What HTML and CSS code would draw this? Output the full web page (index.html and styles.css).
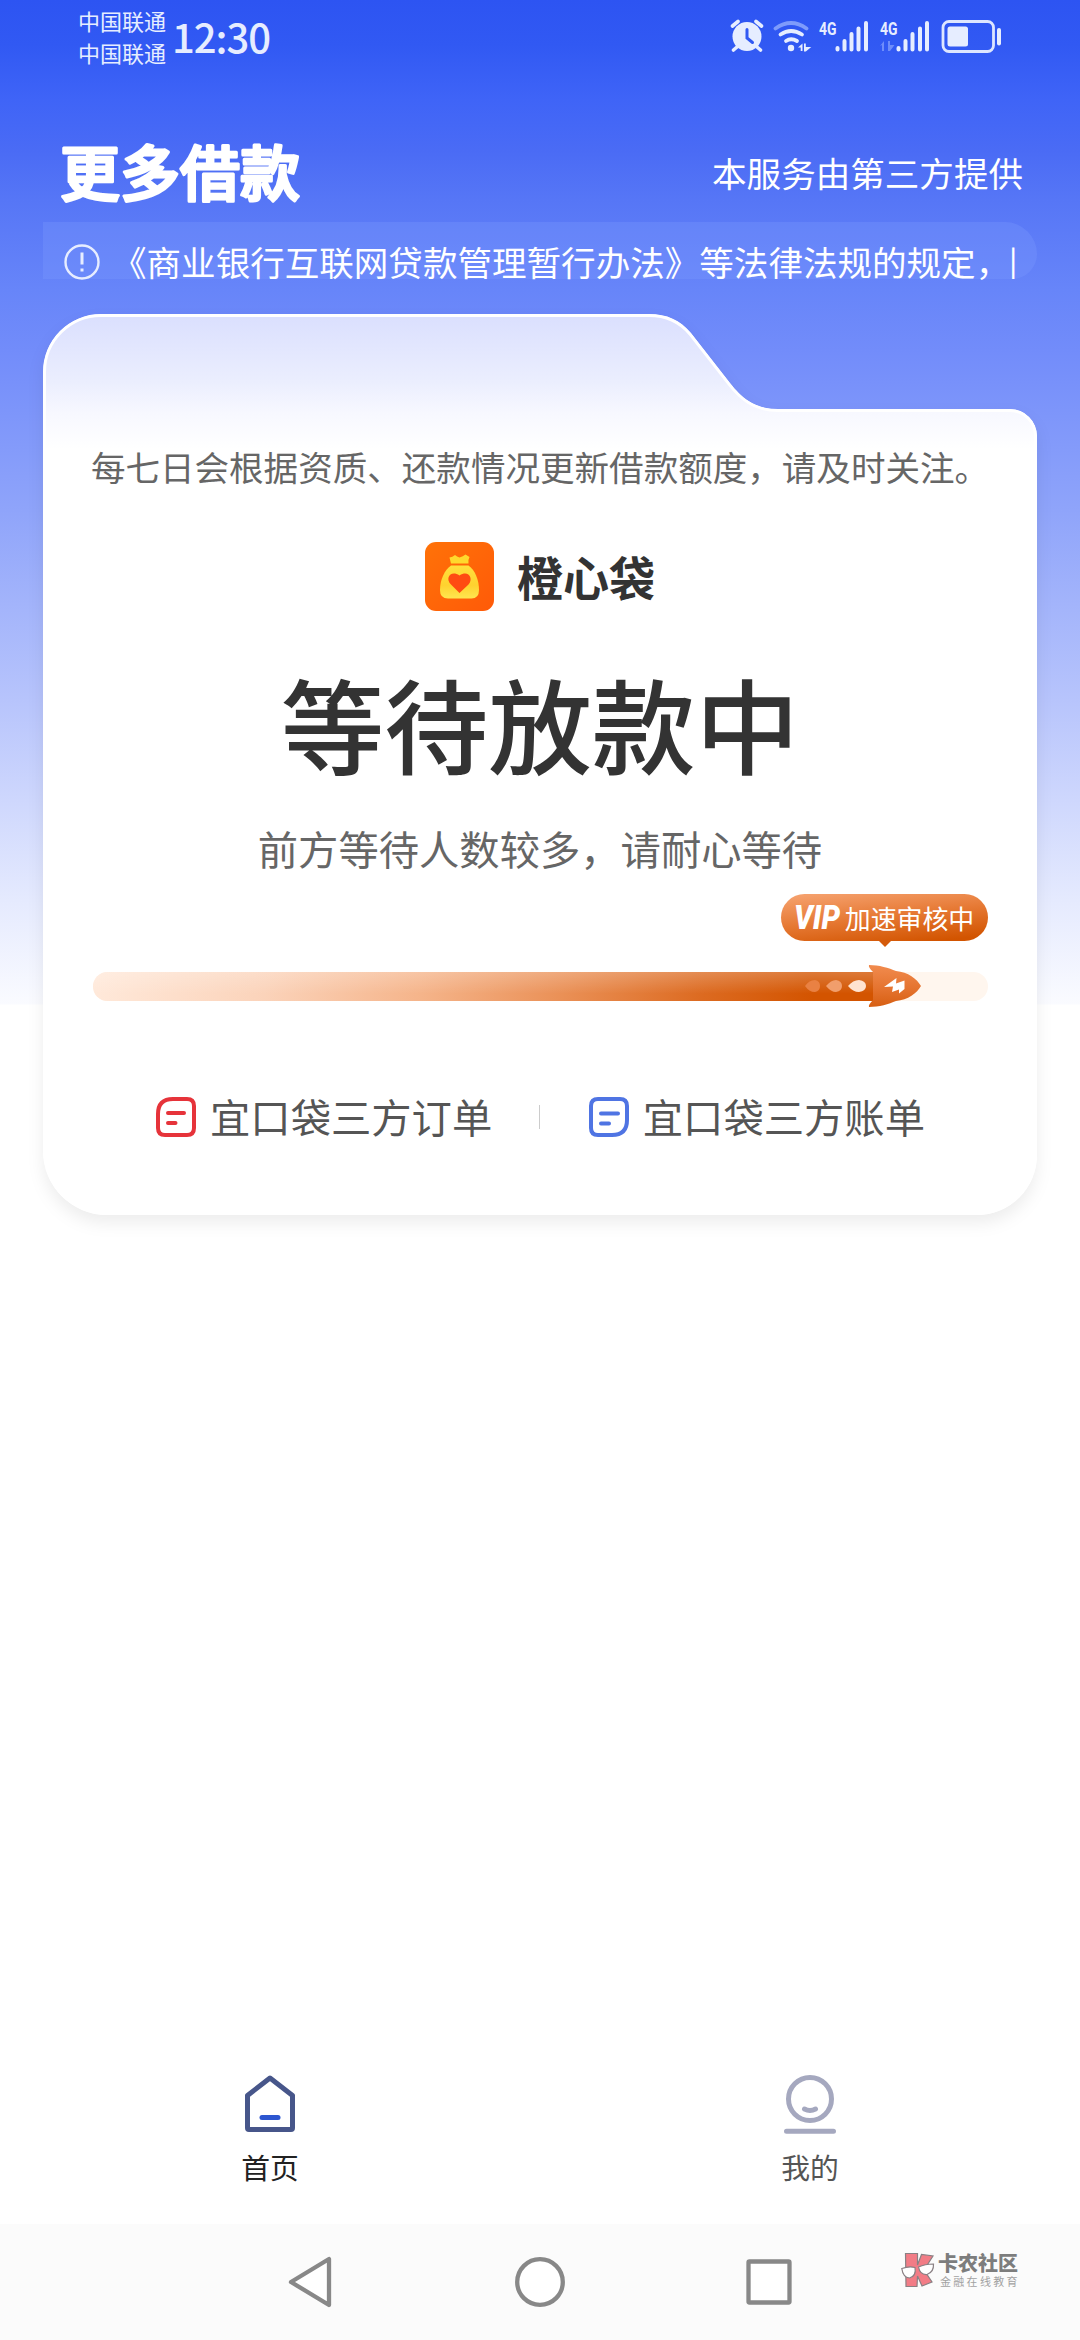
FILE: index.html
```html
<!DOCTYPE html>
<html lang="zh-CN">
<head>
<meta charset="utf-8">
<title>更多借款</title>
<link rel="stylesheet" href="styles.css">
</head>
<body>
<div class="screen">
  <header class="status">
    <div class="carriers"><span>中国联通</span><span>中国联通</span></div>
    <div class="clock">12:30</div>
    <svg class="status-icons" viewBox="730 16 274 40" width="274" height="40" fill="#e6edff">
      <circle cx="747" cy="36.500" r="14.500"/>
      <path d="M732.500 26l5.500-4.500M761.500 26l-5.500-4.500M737 47l-3.500 3M757 47l3.500 3" stroke="#e6edff" stroke-width="3.600" stroke-linecap="round"/>
      <path d="M747 29.500v8.500l5.500 4.500" fill="none" stroke="#3159f3" stroke-width="3" stroke-linecap="round"/>
      <g fill="none" stroke="#e6edff" stroke-width="3.800" stroke-linecap="round">
        <path d="M775.500 28.500Q791 17.500 806.500 28.500" stroke="#7e9bfb"/>
        <path d="M780.500 34.500Q791 27.500 802 34.500"/>
        <path d="M786 41Q791 37.500 797 41"/>
      </g>
      <circle cx="791" cy="48" r="3.200"/>
      <path d="M798 47.500l4.500-4v7.500h-1.800v-3.500zM804 43.500h1.800v3.500h5.500l-5.500 4.500h-1.800z"/>
      <text class="net" x="819" y="34.500" textLength="17.500" lengthAdjust="spacingAndGlyphs">4G</text>
      <path d="M837.500 48v1.500M844.500 41v8.500M851.500 34v15.500M858.500 28.500v21M866 23v26.500" stroke="#e6edff" stroke-width="4" stroke-linecap="round"/>
      <text class="net" x="880" y="34.500" textLength="17.500" lengthAdjust="spacingAndGlyphs">4G</text>
      <path d="M880 46l4-5v10h-2v-6zM888 41h2v4h4.500l-4.500 6h-2z" fill="#6e8dfa"/>
      <path d="M898.500 48v1.500M905.500 41v8.500M912.500 34v15.500M920 28.500v21M927 23v26.500" stroke="#e6edff" stroke-width="4" stroke-linecap="round"/>
      <rect x="943" y="21.500" width="50.500" height="30" rx="6" fill="none" stroke="#dde6ff" stroke-width="2.800"/>
      <rect x="947.500" y="26.500" width="20.500" height="20" rx="2.500"/>
      <rect x="997" y="28" width="4" height="17.500" rx="2"/>
    </svg>
  </header>

  <div class="heading">
    <h1 class="title"><svg viewBox="0 0 250 96" width="250" height="96"><text x="0" y="72">更多借款</text></svg></h1>
    <span class="provider">本服务由第三方提供</span>
  </div>

  <div class="notice">
    <svg class="notice-icon" viewBox="0 0 36 36" width="36" height="36" fill="none" stroke="#e7edff">
      <circle cx="18" cy="18" r="16.500" stroke-width="2.400"/>
      <path d="M18 8.500v12M18 24.500v3" stroke-width="3"/>
    </svg>
    <p class="notice-text">《商业银行互联网贷款管理暂行办法》等法律法规的规定&#xFF0C;</p><span class="notice-edge">|</span>
  </div>

  <main class="card">
    <svg class="card-shape" viewBox="0 0 994 901" width="994" height="901">
      <defs>
        <linearGradient id="sheet" x1="0" y1="0" x2="0" y2="901" gradientUnits="userSpaceOnUse">
          <stop offset="0" stop-color="#dadffe"/>
          <stop offset=".075" stop-color="#ebeefe"/>
          <stop offset=".11" stop-color="#f7f8ff"/>
          <stop offset=".15" stop-color="#fff"/>
        </linearGradient>
        <clipPath id="outline"><path d="M0 58A58 58 0 0 1 58 0H606C624 0 637 6 648 19L687 69C698 83 711 95 735 95H967A27 27 0 0 1 994 122V841A60 60 0 0 1 934 901H64A64 64 0 0 1 0 837Z"/></clipPath>
      </defs>
      <path clip-path="url(#outline)" d="M0 58A58 58 0 0 1 58 0H606C624 0 637 6 648 19L687 69C698 83 711 95 735 95H967A27 27 0 0 1 994 122V841A60 60 0 0 1 934 901H64A64 64 0 0 1 0 837Z" fill="url(#sheet)" stroke="#fff" stroke-width="6"/>
    </svg>
    <p class="tip">每七日会根据资质、还款情况更新借款额度&#xFF0C;请及时关注。</p>

    <div class="brand">
      <svg viewBox="0 0 69 69" width="69" height="69">
        <defs>
          <linearGradient id="tile" x1="0" y1="0" x2="1" y2="1"><stop offset="0" stop-color="#ff7208"/><stop offset="1" stop-color="#ff5a08"/></linearGradient>
          <linearGradient id="bag" x1="0" y1="0" x2="0" y2="1"><stop offset="0" stop-color="#ffe03c"/><stop offset=".6" stop-color="#ffd22f"/><stop offset="1" stop-color="#ffe650"/></linearGradient>
        </defs>
        <rect width="69" height="69" rx="11" fill="url(#tile)"/>
        <path d="M26 21.500L24.500 15.500Q27.500 15 30 13Q32 14.500 34.500 15.500Q38 14.500 40.500 12.500L44.500 15Q43 17.500 43.500 21.500Z" fill="#ffd92d"/>
        <path d="M26 23.500H43.500C50 28 54 38 54 48Q54 56.500 46.500 56.500H23Q15 56.500 15 48C15 38 19.500 28 26 23.500Z" fill="url(#bag)"/>
        <path d="M34.500 51L26 42.500C19.500 36 26 27.500 34.500 33.500C43 27.500 49 36 43.500 42.500Z" fill="#ff4b12"/>
      </svg>
      <span class="brand-name">橙心袋</span>
    </div>

    <h2 class="state">等待放款中</h2>
    <p class="queue">前方等待人数较多&#xFF0C;请耐心等待</p>

    <div class="progress">
      <div class="bubble"><svg viewBox="0 0 50 46" width="50" height="46"><text class="vip" x="0" y="34" textLength="46" lengthAdjust="spacingAndGlyphs">VIP</text></svg><span>加速审核中</span></div>
      <div class="track">
        <div class="fill"></div>
        <svg class="rocket" viewBox="0 0 120 44" width="120" height="44">
          <defs>
            <linearGradient id="hull" x1="0" y1="0" x2="0" y2="1"><stop offset="0" stop-color="#f18b4e"/><stop offset=".55" stop-color="#e57430"/><stop offset="1" stop-color="#d75f12"/></linearGradient>
          </defs>
          <path d="M64 1C74 1 84 4 91 7C103 8 112 15 116 22C112 29 103 36 91 37C84 40 74 43 64 43Q63 41 68 36V8Q63 3 64 1Z" fill="url(#hull)"/>
          <path d="M0 22Q4 16 10 16Q15 17 15 22Q15 27 10 28Q4 28 0 22Z" fill="#e98143"/>
          <path d="M21 22Q26 16 31 16Q37 17 37 22Q37 27 31 28Q26 28 21 22Z" fill="#f19e6c"/>
          <path d="M43 22Q48 16 54 16Q61 17 61 22Q61 27 54 28Q48 28 43 22Z" fill="#ffe3d0"/>
          <path d="M79 23L91.500 14L91 19.500L99.500 16.500V25L94 29.500V25.500L87 28L88 22.500Z" fill="#fff"/>
        </svg>
      </div>
    </div>

    <nav class="links">
      <a class="link">
        <svg viewBox="0 0 42 42" width="42" height="42" fill="none" stroke="#e6333a" stroke-width="4" stroke-linecap="round"><path d="M18 3H32Q39 3 39 10V32Q39 39 32 39H10Q3 39 3 32V18Q3 3 18 3Z"/><path d="M13 17H29M13 27H20.500"/></svg>
        <span>宜口袋三方订单</span>
      </a>
      <span class="rule"></span>
      <a class="link">
        <svg viewBox="0 0 42 42" width="42" height="42" fill="none" stroke="#4f74e3" stroke-width="4" stroke-linecap="round"><path d="M10 3H32Q39 3 39 10V24Q39 39 24 39H10Q3 39 3 32V10Q3 3 10 3Z"/><path d="M13 17.500H30M13 27.500H21"/></svg>
        <span>宜口袋三方账单</span>
      </a>
    </nav>
  </main>

  <div class="spacer"></div>

  <nav class="tabs">
    <a class="tab active">
      <svg viewBox="0 0 60 60" width="60" height="60" fill="none" stroke-linecap="round" stroke-linejoin="round"><path d="M30 4L52.500 21.500V54Q52.500 55.500 51 55.500H9Q7.500 55.500 7.500 54V21.500Z" stroke="#47568a" stroke-width="5"/><path d="M22 43.500H38" stroke="#2d56d0" stroke-width="5"/></svg>
      <span>首页</span>
    </a>
    <a class="tab">
      <svg viewBox="0 0 60 60" width="60" height="60" fill="none" stroke="#a5a8bf" stroke-width="5" stroke-linecap="round"><circle cx="30" cy="25" r="21.500"/><path d="M24.500 35Q30 38 35.500 35M6.500 57.300H53.500"/></svg>
      <span>我的</span>
    </a>
  </nav>

  <footer class="system">
    <svg viewBox="0 0 60 60" width="60" height="60"><path d="M48 7V53L10 30Z"/></svg>
    <svg viewBox="0 0 60 60" width="60" height="60"><circle cx="30" cy="30" r="22.800"/></svg>
    <svg viewBox="0 0 60 60" width="60" height="60"><rect x="9.500" y="9.500" width="41" height="41" rx="1"/></svg>
  </footer>

  <div class="watermark">
    <svg viewBox="0 0 34 36" width="34" height="36" stroke="#8a8084" stroke-width="1.200">
      <path d="M4.500 1.500H16.500V13L20.500 2.500L32 4L23 18L31 30L21 34L16.500 24L16 34.500H5Z" fill="#f27c86"/>
      <path d="M.8 16.500Q8 14 14 15.500Q15.500 24 8.500 26Q2 25.500.8 16.500ZM17.500 15Q24 12 32.500 12Q33 20 26 22.500Q19 23 17.500 15Z" fill="#fff"/>
    </svg>
    <div class="wm-text"><b>卡农社区</b><span>金融在线教育</span></div>
  </div>
</div>
</body>
</html>
```
FILE: styles.css
```css
* { box-sizing: border-box; }
body {
  margin: 0;
  background: #fff;
  font-family: "Noto Sans CJK SC", "Noto Sans", sans-serif;
}
h1, h2, p { margin: 0; }
svg { display: block; flex: none; }

.screen {
  position: relative;
  display: flex;
  flex-direction: column;
  width: 1080px;
  height: 2340px;
  overflow: hidden;
  background: linear-gradient(#2d54f2 0, #3159f3 45px, #3f64f7 100px, #4a6bf5 150px, #5676f6 200px, #6785f9 290px, #728cfa 350px, #8fa4fa 510px, #b7c4fc 700px, #e5eafe 900px, #fafbff 1004px, #fff 1005px);
}

/* status bar */
.status {
  display: flex;
  height: 112px;
  padding-left: 78px;
  color: #e6edff;
}
.carriers {
  display: flex;
  flex-direction: column;
  width: 94px;
  padding-top: 4px;
  font-size: 22px;
  line-height: 32px;
}
.clock {
  width: 558px;
  padding-top: 6px;
  font-size: 40px;
  line-height: 61px;
  font-weight: 500;
  letter-spacing: -1px;
}
.status-icons { margin-top: 16px; }
.net { font: 700 18px "Roboto", sans-serif; }

.heading {
  display: flex;
  align-items: center;
  justify-content: space-between;
  height: 110px;
  padding: 10px 57px 0 60px;
  color: #fff;
}
/* medium weight plus a round-joined stroke gives the soft stroke ends */
.title svg { overflow: visible; }
.title text {
  font-size: 60px;
  font-weight: 500;
  fill: #fff;
  stroke: #fff;
  stroke-width: 3px;
  stroke-linejoin: round;
}
.provider { font-size: 34.56px; line-height: 52px; }

.notice {
  display: flex;
  align-items: center;
  height: 57px;
  margin: 0 43px;
  padding: 22px 20px 0 21px;
  border-radius: 0 36px 28px 0;
  background: rgba(125, 155, 255, .3);
  color: #fff;
}
.notice-text {
  margin: -2px 0 0 12px;
  white-space: nowrap;
  font-size: 34.56px;
  line-height: 52px;
}
.notice-edge { margin: -5px 0 0 -1px; font-size: 28px; line-height: 40px; font-weight: 500; }

.card {
  position: relative;
  display: flex;
  flex-direction: column;
  align-items: center;
  width: 994px;
  height: 901px;
  margin: 35px auto 0;
}
.card-shape {
  position: absolute;
  inset: 0;
  z-index: 0;
  filter: drop-shadow(0 8px 8px rgba(0, 0, 0, .07));
}
.card > :not(.card-shape) { position: relative; z-index: 1; }
.tip {
  margin-top: 126px;
  white-space: nowrap;
  font-size: 34.56px;
  line-height: 52px;
  color: #666;
}
.brand {
  display: flex;
  align-items: center;
  gap: 23px;
  height: 69px;
  margin-top: 50px;
}
.brand-name { font-size: 46.08px; line-height: 67px; font-weight: 700; color: #333; }
.state {
  margin-top: 36px;
  font-size: 103.68px;
  line-height: 150px;
  font-weight: 500;
  color: #333;
}
.queue {
  margin-top: 21px;
  white-space: nowrap;
  font-size: 40.32px;
  line-height: 60px;
  color: #666;
}

.progress {
  display: flex;
  flex-direction: column;
  width: 895px;
  margin-top: 16px;
}
.bubble {
  position: relative;
  display: flex;
  align-items: center;
  justify-content: center;
  gap: 1px;
  width: 207px;
  height: 47px;
  margin-left: auto;
  border-radius: 24px;
  background: linear-gradient(174deg, #f5a06c 5%, #e67934 48%, #d25400 92%);
  color: #fff;
}
.bubble::after {
  content: "";
  position: absolute;
  top: 46px;
  left: 97px;
  border: 7px solid transparent;
  border-top-color: #d45a0a;
  border-bottom: 0;
}
.bubble span { font-size: 25.9px; line-height: 38px; }
.bubble svg { overflow: visible; }
.vip { font: italic 900 33px "Roboto", sans-serif; fill: #fff; }
.track {
  display: flex;
  height: 29px;
  margin-top: 31px;
  border-radius: 15px;
  background: #fff6ee;
}
.fill {
  width: 783px;
  border-radius: 15px 0 0 15px;
  background:
    linear-gradient(rgba(255, 255, 255, .22), rgba(255, 255, 255, 0) 75%),
    linear-gradient(94deg, #ffe9da 0, #fbd3ba 22%, #f5b48a 42%, #ea9056 60%, #dc6a20 78%, #d35400 92%);
}
.rocket { margin: -8px 0 0 -71px; }

.links {
  display: flex;
  align-items: center;
  width: 770px;
  height: 60px;
  margin-top: 86px;
  font-size: 40.32px;
  line-height: 56px;
  color: #555;
}
.link { display: flex; align-items: center; gap: 13px; }
.link span { margin-top: -2px; white-space: nowrap; }
.link svg { margin-top: -1px; }
.rule { width: 2px; height: 24px; margin: 0 48px 0 47px; background: #ccc; }

.spacer { flex: 1; }

.tabs { display: flex; height: 154px; }
.tab {
  display: flex;
  flex: 1;
  flex-direction: column;
  align-items: center;
  padding-top: 4px;
  font-size: 28.8px;
  line-height: 42px;
  color: #555;
}
.tab span { margin-top: 12px; }
.active { color: #222; }

.system {
  display: flex;
  align-items: center;
  justify-content: center;
  gap: 169px;
  height: 116px;
  background: #fbfbfb;
}
.system svg { fill: #fff; stroke: #888; stroke-width: 4.3px; stroke-linejoin: round; }

.watermark {
  position: absolute;
  left: 901px;
  top: 2252px;
  display: flex;
  gap: 3px;
}
.wm-text { display: flex; flex-direction: column; white-space: nowrap; }
.wm-text b { font-size: 20px; line-height: 22px; font-weight: 900; color: #7d7d7d; }
.wm-text span { margin-left: 2px; font-size: 11px; line-height: 14px; letter-spacing: 2.3px; color: #a2a2a2; }
```
